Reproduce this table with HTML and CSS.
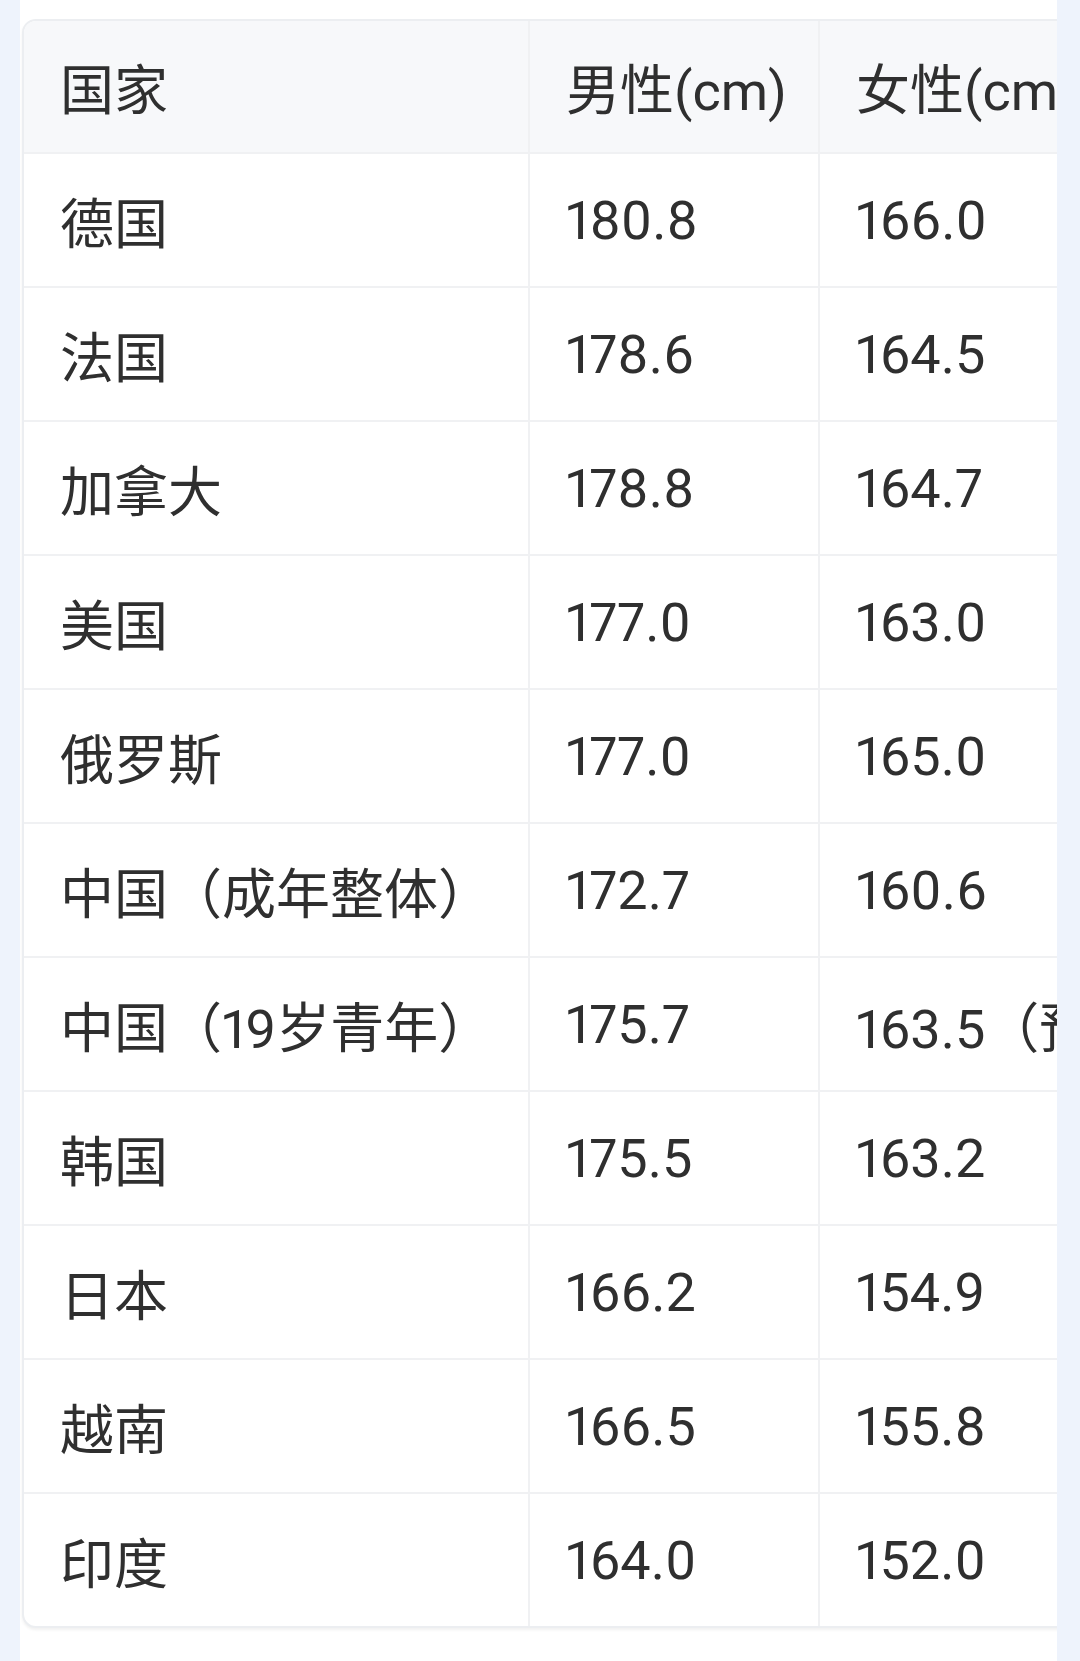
FILE: index.html
```html
<!DOCTYPE html>
<html lang="zh-CN">
<head>
<meta charset="utf-8">
<title>各国平均身高</title>
<link rel="stylesheet" href="styles.css">
</head>
<body>
<main class="page">
  <div class="scroller">
    <div class="card">
      <div class="cell head">国家</div>
      <div class="cell head">男性(cm)</div>
      <div class="cell head last-col">女性(cm)</div>

      <div class="cell">德国</div><div class="cell">180.8</div><div class="cell last-col">166.0</div>
      <div class="cell">法国</div><div class="cell">178.6</div><div class="cell last-col">164.5</div>
      <div class="cell">加拿大</div><div class="cell">178.8</div><div class="cell last-col">164.7</div>
      <div class="cell">美国</div><div class="cell">177.0</div><div class="cell last-col">163.0</div>
      <div class="cell">俄罗斯</div><div class="cell">177.0</div><div class="cell last-col">165.0</div>
      <div class="cell">中国（成年整体）</div><div class="cell">172.7</div><div class="cell last-col">160.6</div>
      <div class="cell">中国（19岁青年）</div><div class="cell">175.7</div><div class="cell last-col">163.5（预测）</div>
      <div class="cell">韩国</div><div class="cell">175.5</div><div class="cell last-col">163.2</div>
      <div class="cell">日本</div><div class="cell">166.2</div><div class="cell last-col">154.9</div>
      <div class="cell">越南</div><div class="cell">166.5</div><div class="cell last-col">155.8</div>
      <div class="cell last-row">印度</div><div class="cell last-row">164.0</div><div class="cell last-row last-col">152.0</div>
    </div>
  </div>
</main>
</body>
</html>
```

FILE: styles.css
```css
html, body {
  margin: 0;
  padding: 0;
}

body {
  background: #eef3fc;
  font-family: Roboto, "Noto Sans CJK SC", sans-serif;
  font-variant-numeric: proportional-nums;
  color: #2f2f2f;
}

.page {
  margin: 0 23px 0 20px;
  min-height: 1661px;
  background: #ffffff;
  overflow: hidden;
}

.scroller {
  overflow: hidden;
  padding: 19px 0 8px 2px;
}

.card {
  display: grid;
  grid-template-columns: 506px 290px max-content;
  width: max-content;
  border: 2px solid #eceef1;
  border-radius: 14px;
  overflow: hidden;
  box-shadow: 0 2px 3px rgba(0, 0, 0, 0.06);
  background: #ffffff;
}

.cell {
  box-sizing: border-box;
  height: 134px;
  padding: 0 36px;
  display: flex;
  align-items: center;
  font-size: 54px;
  white-space: nowrap;
  border-right: 2px solid #f0f1f3;
  border-bottom: 2px solid #f0f1f3;
}

.head {
  height: 133px;
  background: #f7f8fa;
}

.last-col {
  border-right: none;
}

.last-row {
  border-bottom: none;
  height: 132px;
}
```
